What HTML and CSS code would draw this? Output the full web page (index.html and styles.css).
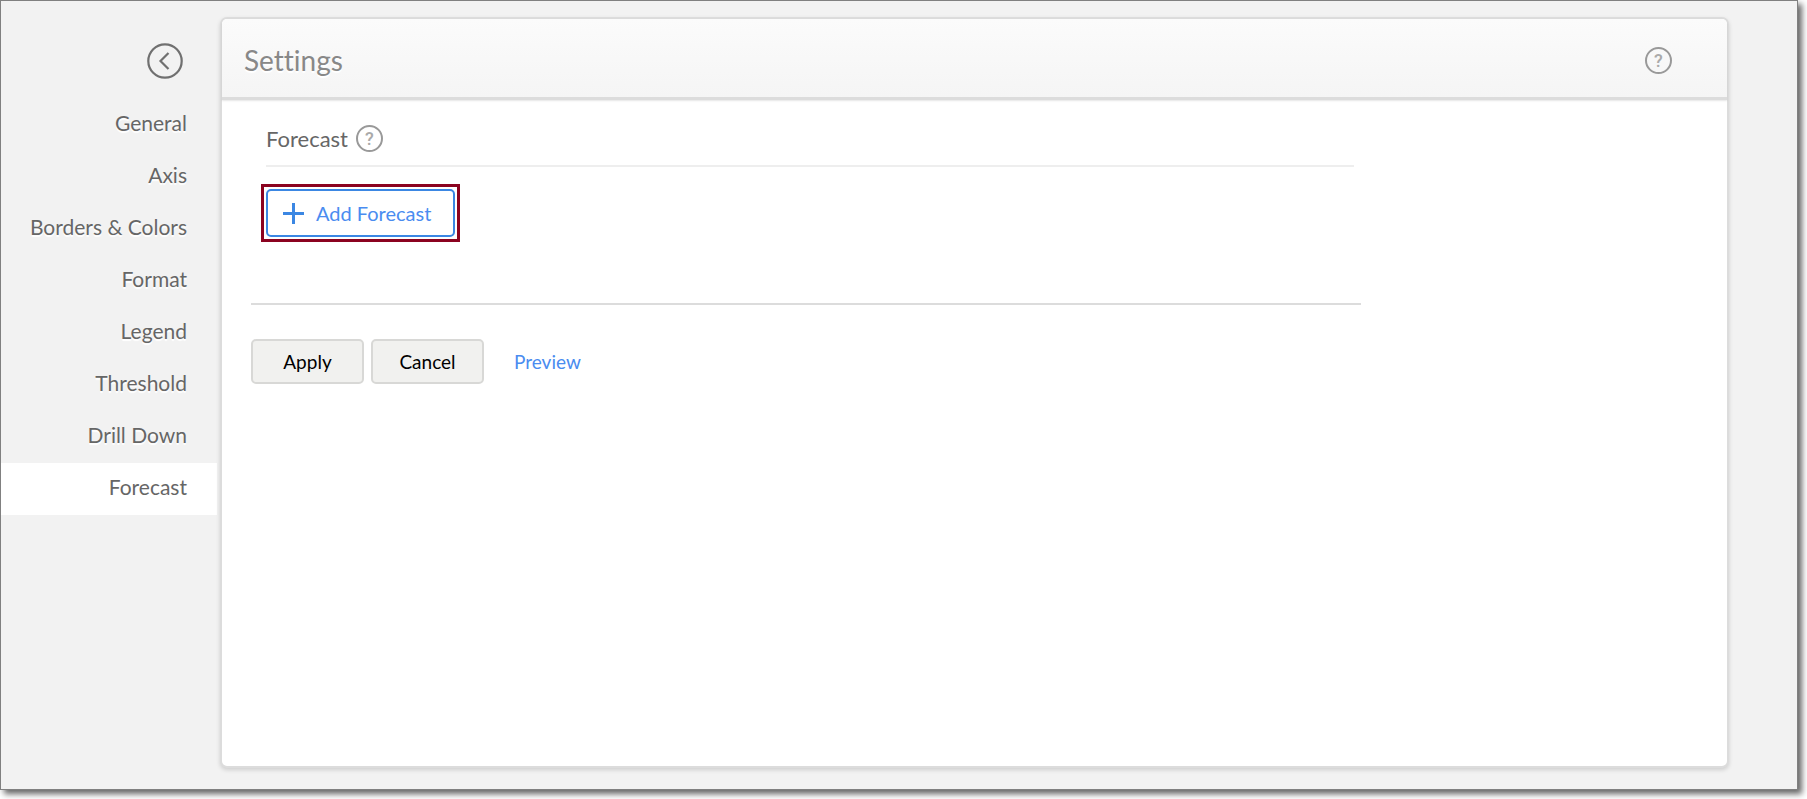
FILE: index.html
```html
<!DOCTYPE html>
<html lang="en">
<head>
<meta charset="utf-8">
<title>Settings</title>
<link rel="stylesheet" href="styles.css">
</head>
<body>
<div class="window">
  <aside class="sidebar">
    <button class="back" type="button" aria-label="Back">
      <svg width="36" height="36" viewBox="0 0 36 36" fill="none" stroke="#707070">
        <circle cx="18" cy="18" r="16.7" stroke-width="2.200"/>
        <path d="M21.500 10L13.500 18L21.500 26" stroke-width="2.200"/>
      </svg>
    </button>
    <nav class="menu">
      <a class="menu-item" href="#">General</a>
      <a class="menu-item" href="#">Axis</a>
      <a class="menu-item" href="#">Borders &amp; Colors</a>
      <a class="menu-item" href="#">Format</a>
      <a class="menu-item" href="#">Legend</a>
      <a class="menu-item" href="#">Threshold</a>
      <a class="menu-item" href="#">Drill Down</a>
      <a class="menu-item active" href="#" aria-current="page">Forecast</a>
    </nav>
  </aside>
  <main class="panel">
    <header class="panel-header">
      <h1 class="title">Settings</h1>
      <button class="help" type="button" aria-label="Help">?</button>
    </header>
    <div class="panel-body">
      <section class="section">
        <div class="section-head">
          <h2 class="section-title">Forecast</h2>
          <button class="help" type="button" aria-label="Forecast help">?</button>
        </div>
        <div class="highlight">
          <button class="add" type="button">
            <svg width="21" height="21" viewBox="0 0 21 21" fill="#3b87e3"><path d="M9 0h3v9h9v3h-9v9H9v-9H0V9h9z"/></svg>
            Add Forecast
          </button>
        </div>
      </section>
      <div class="actions">
        <button class="btn" type="button">Apply</button>
        <button class="btn" type="button">Cancel</button>
        <a class="preview" href="#">Preview</a>
      </div>
    </div>
  </main>
</div>
</body>
</html>
```
FILE: styles.css
```css
* {
  box-sizing: border-box;
}

body {
  margin: 0;
  min-height: 100vh;
  display: flex;
  padding: 0 9px 9px 0;
  background: #fff;
  color: #666;
  font-family: Lato, "Open Sans", sans-serif;
  font-size: 21px;
  line-height: 24px;
  font-variant-ligatures: none;
}

button {
  font: inherit;
  cursor: pointer;
}

a {
  text-decoration: none;
}

.window {
  flex: 1;
  display: flex;
  gap: 3px;
  padding: 16px 68px 21px 0;
  border: 1px solid #808080;
  background: #f2f2f2;
  box-shadow: 4px 4px 6px rgba(0, 0, 0, 0.6);
}

.sidebar {
  width: 216px;
  flex: none;
}

.back {
  display: block;
  margin: 26px 34px 20px auto;
  padding: 0;
  border: 0;
  background: none;
}

.back svg {
  display: block;
}

.menu-item {
  display: block;
  padding: 12px 30px 16px 0;
  text-align: right;
  color: #666;
  text-shadow: 0 2px 1px #fff;
}

.menu-item.active {
  background: #fff;
}

.panel {
  flex: 1;
  border: 2px solid #dcdcdc;
  border-radius: 7px;
  background: #fff;
  box-shadow: 0 2px 4px rgba(0, 0, 0, 0.15);
}

.panel-header {
  display: flex;
  align-items: center;
  justify-content: space-between;
  height: 81px;
  padding: 4px 55px 0 22px;
  border-bottom: 3px solid #dcdcdc;
  border-radius: 5px 5px 0 0;
  background: linear-gradient(#fbfbfb, #f5f5f5);
  box-shadow: 0 1px 2px rgba(0, 0, 0, 0.1);
}

.title {
  margin: 0;
  color: #888;
  font-size: 28px;
  font-weight: 400;
  line-height: 32px;
  text-shadow: 0 2px 1px #fff;
}

.help {
  width: 27px;
  height: 27px;
  padding: 0;
  border: 2px solid #999;
  border-radius: 50%;
  background: none;
  color: #aaa;
  font-family: Roboto, sans-serif;
  font-size: 18px;
  font-weight: 500;
  line-height: 24px;
  text-align: center;
}

.panel-body {
  max-width: 1139px;
  padding: 25px 0 0 29px;
}

.section {
  padding: 0 7px 61px 10px;
  border-bottom: 2px solid #dcdcdc;
}

.section-head {
  display: flex;
  align-items: center;
  gap: 8px;
  margin: 0 0 17px 5px;
  padding-bottom: 13px;
  border-bottom: 2px solid #eee;
}

.section-title {
  margin: 0;
  font-size: 22px;
  font-weight: 400;
  line-height: 24px;
}

.highlight {
  width: fit-content;
  padding: 2px;
  border: 3px solid #8b0320;
}

.add {
  display: flex;
  align-items: center;
  gap: 12px;
  height: 48px;
  padding: 0 22px 0 15px;
  border: 2px solid #3b87e3;
  border-radius: 5px;
  background: #fff;
  color: #4a8cf0;
  font-size: 20px;
}

.actions {
  display: flex;
  align-items: center;
  gap: 7px;
  padding-top: 34px;
  font-size: 19px;
}

.btn {
  width: 113px;
  height: 45px;
  padding: 0;
  border: 2px solid #d8d8d6;
  border-radius: 5px;
  background: #f1f1ef;
  color: #000;
}

.preview {
  margin-left: 23px;
  color: #4a8cf0;
}
```
